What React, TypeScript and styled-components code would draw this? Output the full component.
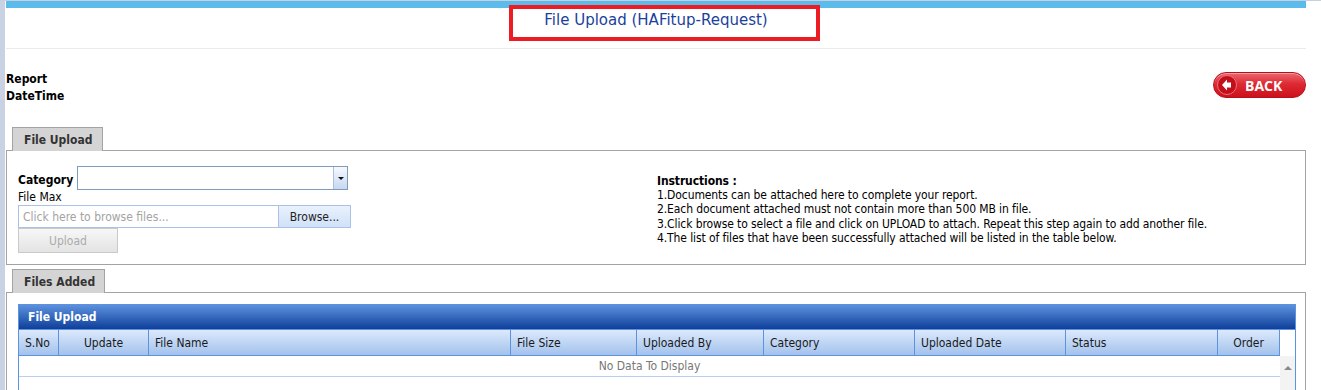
import React, { FC } from 'react';
import styled, { createGlobalStyle } from 'styled-components';

const GlobalStyle = createGlobalStyle`
  html, body {
    margin: 0;
    padding: 0;
    background: #fff;
  }
  body {
    font-family: "DejaVu Sans Condensed", "Liberation Sans", sans-serif;
    font-size: 12px;
    color: #000;
  }
`;

const Shell = styled.div`
  display: flex;
  min-height: 389px;
  border-top: 1px solid #c6d0e1;
  overflow: hidden;
`;

const LeftRail = styled.div`
  flex: none;
  width: 5px;
  background: #c8d2e2;
`;

const Main = styled.div`
  flex: none;
  width: 1300px;
  margin-left: 1px;
`;

const TopBar = styled.div`
  height: 7px;
  background: #5bbcec;
`;

const Header = styled.div`
  position: relative;
  height: 40px;
  border-bottom: 1px solid #ebebeb;
  display: flex;
  justify-content: center;
  align-items: flex-start;
`;

const Title = styled.div`
  padding-top: 3px;
  line-height: 18px;
  font-family: "DejaVu Sans", "Liberation Sans", sans-serif;
  font-size: 15px;
  color: #1c3f9c;
`;

const Marker = styled.div`
  position: absolute;
  left: 503px;
  top: -3px;
  width: 311px;
  height: 36px;
  box-sizing: border-box;
  border: 4px solid #ed1c24;
`;

const InfoRow = styled.div`
  display: flex;
  justify-content: space-between;
  align-items: flex-start;
  padding-top: 22px;
`;

const InfoLabels = styled.div`
  font-weight: bold;
  line-height: 17px;
`;

const BackButton = styled.button`
  display: flex;
  align-items: center;
  gap: 8px;
  margin-top: 1px;
  width: 93px;
  height: 26px;
  padding: 0 0 0 3px;
  border: 1px solid #b80f19;
  border-radius: 13px;
  background: linear-gradient(#ea6870 0%, #de2a33 45%, #cc111c 100%);
  color: #fff;
  font-family: "Open Sans", "Liberation Sans", sans-serif;
  font-weight: bold;
  font-size: 14px;
  box-shadow: inset 0 1px 0 rgba(255, 255, 255, 0.4);
`;

const TabStrip = styled.div`
  display: flex;
  padding-left: 6px;
  margin-top: 22px;
  position: relative;
  z-index: 1;
  margin-bottom: -1px;
`;

const Tab = styled.div<{ $width: number }>`
  width: ${({ $width }) => $width}px;
  height: 24px;
  box-sizing: border-box;
  border: 1px solid #a3a3a3;
  border-bottom: none;
  background: #d4d4d4;
  padding-left: 11px;
  display: flex;
  align-items: center;
  font-weight: bold;
  color: #333;
`;

const Panel = styled.div<{ $open?: boolean }>`
  border: 1px solid #a3a3a3;
  ${({ $open }) => ($open ? 'border-bottom: none;' : '')}
`;

const FormGrid = styled.div`
  display: grid;
  grid-template-columns: 1fr 1fr;
  align-items: center;
  padding: 15px 0 11px;
`;

const FormCol = styled.div`
  padding-left: 11px;
`;

const FieldRow = styled.div`
  display: flex;
  align-items: center;
`;

const Label = styled.span`
  font-weight: bold;
  margin-right: 4px;
  width: 55px;
  padding-top: 3px;
`;

const Select = styled.div`
  width: 271px;
  height: 24px;
  box-sizing: border-box;
  border: 1px solid #7f9db9;
  display: flex;
  justify-content: flex-end;
`;

const SelectArrow = styled.div`
  width: 13px;
  border-left: 1px solid #a9c0e2;
  background: linear-gradient(#f7f9fd, #c6d8f3);
  display: flex;
  align-items: center;
  justify-content: center;
  &::after {
    content: '';
    border-left: 3px solid transparent;
    border-right: 3px solid transparent;
    border-top: 3px solid #111;
  }
`;

const SubLabel = styled.div`
  line-height: 15px;
`;

const FileInput = styled.div`
  width: 260px;
  height: 23px;
  box-sizing: border-box;
  border: 1px solid #a9c2e5;
  border-right: none;
  padding-left: 4px;
  display: flex;
  align-items: center;
  color: #a3a3a3;
`;

const BrowseButton = styled.div`
  width: 73px;
  height: 23px;
  box-sizing: border-box;
  border: 1px solid #a9c2e5;
  background: linear-gradient(#e9f1fc, #d0e1f8);
  display: flex;
  align-items: center;
  justify-content: center;
  color: #222;
`;

const UploadButton = styled.div`
  width: 100px;
  height: 25px;
  box-sizing: border-box;
  border: 1px solid #cacaca;
  background: linear-gradient(#f7f7f7, #e3e3e3);
  display: flex;
  align-items: center;
  justify-content: center;
  color: #ababab;
`;

const Instructions = styled.div`
  padding-left: 1px;
  line-height: 14.3px;
  letter-spacing: -0.1px;
`;

const InstructionsTitle = styled.div`
  font-weight: bold;
`;

const GapTab = styled(TabStrip)`
  margin-top: 4px;
`;

const GridWrap = styled.div`
  padding: 11px 9px 0 11px;
`;

const Grid = styled.div`
  border: 1px solid #5b93e0;
  border-bottom: none;
`;

const GridTitle = styled.div`
  height: 24px;
  background: linear-gradient(#5c91de, #0f3f9a);
  color: #fff;
  font-weight: bold;
  padding-left: 9px;
  display: flex;
  align-items: center;
`;

const GridBody = styled.div`
  display: flex;
`;

const TableArea = styled.div`
  width: 1261px;
`;

const HeaderRow = styled.div`
  display: flex;
  border-top: 1px solid #5b93e0;
`;

const HeaderCell = styled.div<{ $width: number; $align: 'left' | 'center' }>`
  width: ${({ $width }) => $width}px;
  flex: none;
  height: 26px;
  box-sizing: border-box;
  border-right: 1px solid #5b93e0;
  border-bottom: 1px solid #5b93e0;
  background: linear-gradient(#dce9fc, #a3c2ec);
  display: flex;
  align-items: center;
  justify-content: ${({ $align }) => ($align === 'center' ? 'center' : 'flex-start')};
  padding-left: ${({ $align }) => ($align === 'center' ? 0 : 6)}px;
  color: #1a1a1a;
`;

const EmptyRow = styled.div`
  height: 20px;
  border-bottom: 1px solid #b6cff3;
  display: flex;
  align-items: center;
  justify-content: center;
  color: #777;
`;

const ScrollCol = styled.div`
  flex: 1;
  display: flex;
  flex-direction: column;
  border-top: 1px solid #5b93e0;
`;

const ScrollHead = styled.div`
  height: 26px;
`;

const ScrollTrack = styled.div`
  flex: 1;
  min-height: 40px;
  background: #f3f3f3;
  display: flex;
  justify-content: center;
  padding-top: 10px;
  &::before {
    content: '';
    height: 0;
    border-left: 4px solid transparent;
    border-right: 4px solid transparent;
    border-bottom: 4px solid #8a8a8a;
  }
`;

interface IColumn {
  title: string;
  width: number;
  align: 'left' | 'center';
}

const columns: IColumn[] = [
  { title: 'S.No', width: 40, align: 'left' },
  { title: 'Update', width: 90, align: 'center' },
  { title: 'File Name', width: 362, align: 'left' },
  { title: 'File Size', width: 126, align: 'left' },
  { title: 'Uploaded By', width: 127, align: 'left' },
  { title: 'Category', width: 151, align: 'left' },
  { title: 'Uploaded Date', width: 151, align: 'left' },
  { title: 'Status', width: 152, align: 'left' },
  { title: 'Order', width: 62, align: 'center' },
];

const instructions = [
  '1.Documents can be attached here to complete your report.',
  '2.Each document attached must not contain more than 500 MB in file.',
  '3.Click browse to select a file and click on UPLOAD to attach. Repeat this step again to add another file.',
  '4.The list of files that have been successfully attached will be listed in the table below.',
];

const BackIcon: FC = () => (
  <svg width="20" height="20" viewBox="0 0 20 20">
    <circle cx="10" cy="10" r="9.5" fill="#c20f1a" stroke="#e9737a" strokeWidth="1" />
    <path d="M5 10 L10 4.5 L10 7.5 L14 7.5 L14 12.5 L10 12.5 L10 15.5 Z" fill="#fff" />
  </svg>
);

const App: FC = () => (
  <>
    <GlobalStyle />
    <Shell>
      <LeftRail />
      <Main>
        <TopBar />
        <Header>
          <Title>File Upload (HAFitup-Request)</Title>
          <Marker />
        </Header>

        <InfoRow>
          <InfoLabels>
            <div>Report</div>
            <div>DateTime</div>
          </InfoLabels>
          <BackButton>
            <BackIcon />
            BACK
          </BackButton>
        </InfoRow>

        <TabStrip>
          <Tab $width={91}>File Upload</Tab>
        </TabStrip>
        <Panel>
          <FormGrid>
            <FormCol>
              <FieldRow>
                <Label>Category</Label>
                <Select>
                  <SelectArrow />
                </Select>
              </FieldRow>
              <SubLabel>File Max</SubLabel>
              <FieldRow>
                <FileInput>Click here to browse files...</FileInput>
                <BrowseButton>Browse...</BrowseButton>
              </FieldRow>
              <UploadButton>Upload</UploadButton>
            </FormCol>
            <Instructions>
              <InstructionsTitle>Instructions :</InstructionsTitle>
              {instructions.map((line) => (
                <div key={line}>{line}</div>
              ))}
            </Instructions>
          </FormGrid>
        </Panel>

        <GapTab>
          <Tab $width={93}>Files Added</Tab>
        </GapTab>
        <Panel $open>
          <GridWrap>
            <Grid>
              <GridTitle>File Upload</GridTitle>
              <GridBody>
                <TableArea>
                  <HeaderRow>
                    {columns.map((col) => (
                      <HeaderCell key={col.title} $width={col.width} $align={col.align}>
                        {col.title}
                      </HeaderCell>
                    ))}
                  </HeaderRow>
                  <EmptyRow>No Data To Display</EmptyRow>
                </TableArea>
                <ScrollCol>
                  <ScrollHead />
                  <ScrollTrack />
                </ScrollCol>
              </GridBody>
            </Grid>
          </GridWrap>
        </Panel>
      </Main>
    </Shell>
  </>
);

export default App;
